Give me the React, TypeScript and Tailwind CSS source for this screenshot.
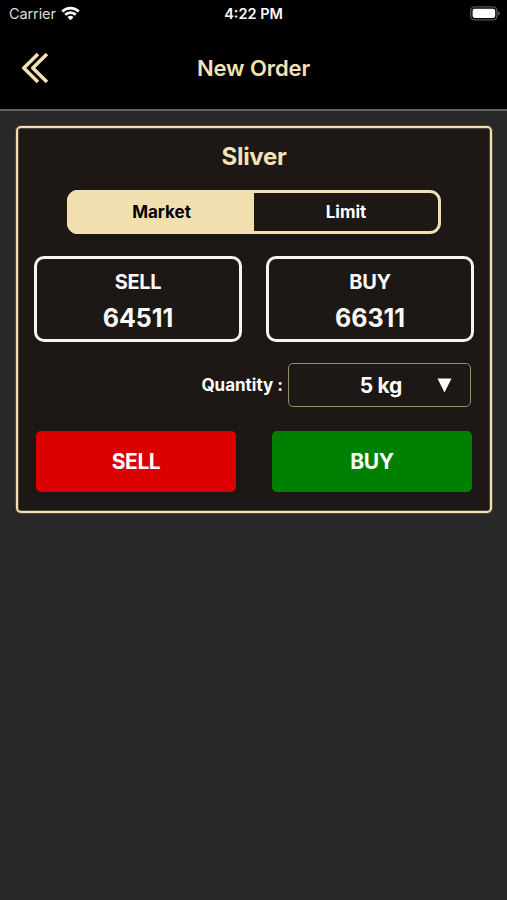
import React from 'react';

function StatusBar() {
  return (
    <div className="grid h-7 grid-cols-3 items-center pl-[8px] pr-[8px] text-[14.5px] leading-7 text-white">
      <div className="flex items-center gap-[5px] pl-px text-[#dcdcdc]">
        <span className="tracking-[-0.1px]">Carrier</span>
        <svg className="-mt-[2px]" width="19" height="15" viewBox="0 0 19 15" fill="none" stroke="#fff" strokeWidth="2.7">
          <path d="M1.2 5.5 A11.8 11.8 0 0 1 17.8 5.5" />
          <path d="M4.2 8.8 A7.5 7.5 0 0 1 14.8 8.8" />
          <path d="M9.5 14.2 L6.5 11.2 A4.3 4.3 0 0 1 12.5 11.2 Z" fill="#fff" stroke="none" />
        </svg>
      </div>
      <div className="text-center font-semibold">4:22 PM</div>
      <div className="-mr-px -mt-[2px] flex justify-end">
        <svg width="30" height="15" viewBox="0 0 30 15">
          <rect x="0.7" y="0.9" width="26.2" height="13" rx="4" fill="none" stroke="#555" strokeWidth="1.4" />
          <rect x="2.6" y="2.8" width="22.6" height="9.2" rx="2" fill="#fff" />
          <path d="M28 5.2 Q30 6 30 7.4 Q30 8.8 28 9.6 Z" fill="#555" />
        </svg>
      </div>
    </div>
  );
}

function Header() {
  return (
    <header className="grid h-[79px] grid-cols-[80px_1fr_80px] items-center">
      <button className="flex pl-[21px]" aria-label="Back">
        <svg width="28" height="32" viewBox="0 0 28 32" fill="none" stroke="#f3dfb0" strokeWidth="3.6" strokeLinejoin="round">
          <path d="M17 2 L2.8 16 L17 30" />
          <path d="M26 2 L11.8 16 L26 30" />
        </svg>
      </button>
      <h1 className="text-center text-[22px] font-semibold leading-7 tracking-[-0.1px] text-[#f3e2b5]">New Order</h1>
    </header>
  );
}

function Quote({ label, price }: { label: string; price: string }) {
  return (
    <div className="flex h-[86px] w-[208px] flex-col items-center rounded-[10px] border-[3px] border-[#f6f3f3] pt-[9px] font-bold text-[#fbf8f8]">
      <div className="text-[20px] leading-7 tracking-[-0.4px]">{label}</div>
      <div className="mt-[6px] text-[25px] leading-8">{price}</div>
    </div>
  );
}

export default function App() {
  return (
    <div className="min-h-[900px] w-[507px] bg-[#282828] font-['Inter','Liberation_Sans',sans-serif]">
      <div className="h-[111px] border-b-2 border-[#626262] bg-black">
        <StatusBar />
        <Header />
      </div>
      <main className="pl-4 pr-[15px] pt-[15px]">
        <section className="h-[387px] rounded-[5px] border-2 border-[#f3dfb1] bg-[#1d1716] shadow-[0_0_0_1px_#4f4636,inset_0_0_0_1px_#4f4636]">
          <h2 className="pt-[13px] text-center text-[24px] font-bold leading-8 tracking-[-0.3px] text-[#f3e2b5]">Sliver</h2>
          <div className="mx-auto mt-[17px] flex h-[44px] w-[374px] rounded-[11px] border-[3px] border-[#f1dfb0] text-[17px] font-bold">
            <button className="-my-[3px] -ml-[3px] w-[187px] rounded-l-[11px] bg-[#f1dfb0] pl-[2px] pt-px text-black">Market</button>
            <button className="flex-1 pt-px text-white">Limit</button>
          </div>
          <div className="mt-[22px] flex justify-between px-4">
            <Quote label="SELL" price="64511" />
            <Quote label="BUY" price="66311" />
          </div>
          <div className="mt-[21px] flex items-center justify-end gap-[5px] pr-[19px] font-bold text-white">
            <span className="mt-[2px] text-[17px]">Quantity :</span>
            <button className="flex h-[44px] w-[183px] items-center justify-end rounded-[5px] border border-[#9b8c68] pr-[18px] text-[21px]">
              <span className="mr-[35px] mt-px tracking-[-0.3px]">5 kg</span>
              <svg width="15" height="15" viewBox="0 0 15 15">
                <path d="M0.5 0.5 H14.5 L7.5 14.5 Z" fill="#fff" />
              </svg>
            </button>
          </div>
          <div className="mt-[24px] flex justify-between px-[18px] text-[21px] font-bold tracking-[-0.4px] text-white">
            <button className="h-[61px] w-[200px] rounded-[5px] bg-[#dc0000]">SELL</button>
            <button className="h-[61px] w-[200px] rounded-[5px] bg-[#008000]">BUY</button>
          </div>
        </section>
      </main>
    </div>
  );
}
